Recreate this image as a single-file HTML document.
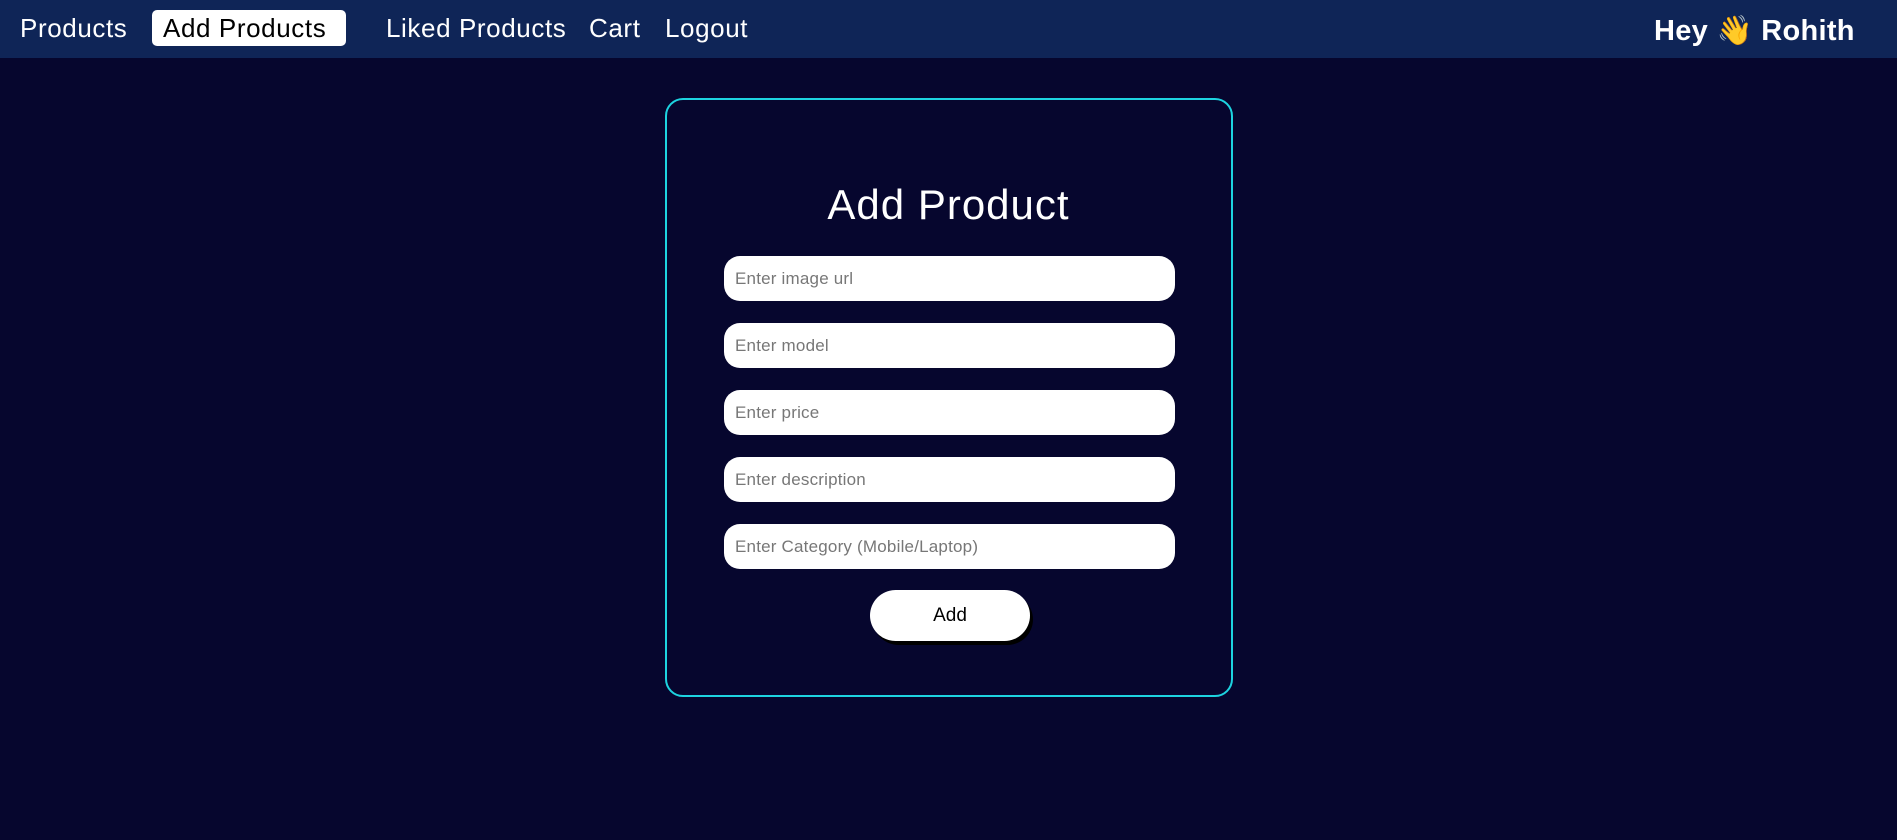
<!DOCTYPE html>
<html><head><style>
*{margin:0;padding:0;box-sizing:border-box}
body{width:1897px;height:840px;background:#06062e;font-family:"Liberation Sans",sans-serif;position:relative;overflow:hidden}
nav{position:absolute;left:0;top:0;width:1897px;height:58px;background:#0f2557}
.n{position:absolute;top:12px;color:#fff;font-size:26px;line-height:32px;letter-spacing:0.6px}
.act{background:#fff;color:#000;border-radius:5px;top:10px;height:36px;padding:2px 11px 0;width:194px}
.hey{position:absolute;top:14px;left:1654px;color:#fff;font-size:29px;font-weight:bold;line-height:34px;letter-spacing:0.3px}
.card{position:absolute;left:665px;top:98px;width:568px;height:599px;border:2px solid #1dd3e0;border-radius:18px}
h1{position:absolute;left:0;width:100%;top:180px;text-align:center;color:#fff;font-size:42px;font-weight:normal;line-height:50px;letter-spacing:1px}
.in{position:absolute;left:724px;width:451px;height:45px;background:#fff;border-radius:16px;color:#777;font-size:17px;line-height:45px;padding-left:11px;letter-spacing:0.2px}
.btn{position:absolute;left:870px;top:590px;width:160px;height:51px;background:#fff;border-radius:26px;box-shadow:3px 4px 0 #000;text-align:center;line-height:51px;font-size:19px;color:#000}
</style></head><body>
<nav>
<span class="n" style="left:20px">Products</span>
<span class="n act" style="left:152px">Add Products</span>
<span class="n" style="left:386px">Liked Products</span>
<span class="n" style="left:589px">Cart</span>
<span class="n" style="left:665px">Logout</span>
<span class="hey">Hey 👋 Rohith</span>
</nav>
<div class="card"></div>
<h1 style="top:180px">Add Product</h1>
<div class="in" style="top:256px">Enter image url</div>
<div class="in" style="top:323px">Enter model</div>
<div class="in" style="top:390px">Enter price</div>
<div class="in" style="top:457px">Enter description</div>
<div class="in" style="top:524px">Enter Category (Mobile/Laptop)</div>
<div class="btn">Add</div>
</body></html>
